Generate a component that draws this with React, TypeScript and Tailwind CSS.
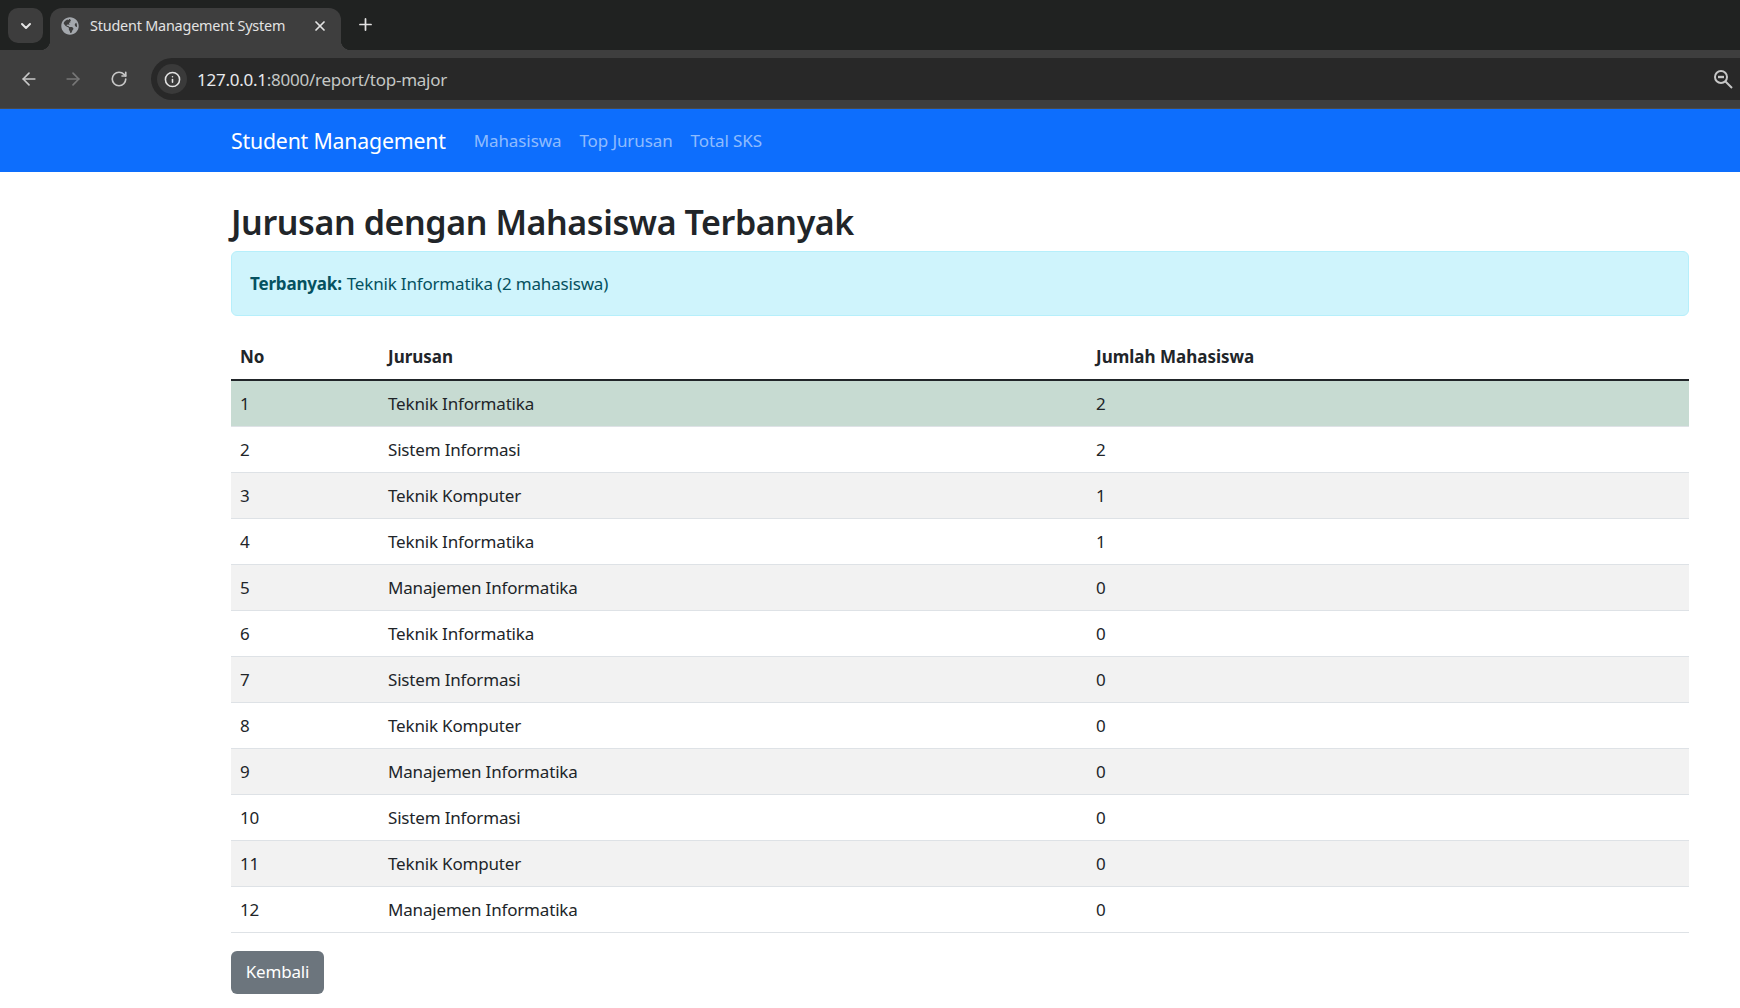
import { ArrowLeft, ArrowRight, ChevronDown, Info, Plus, RotateCw, X } from "lucide-react";
import { FaGlobeAmericas } from "react-icons/fa";

const rows: [number, string, number][] = [
  [1, "Teknik Informatika", 2],
  [2, "Sistem Informasi", 2],
  [3, "Teknik Komputer", 1],
  [4, "Teknik Informatika", 1],
  [5, "Manajemen Informatika", 0],
  [6, "Teknik Informatika", 0],
  [7, "Sistem Informasi", 0],
  [8, "Teknik Komputer", 0],
  [9, "Manajemen Informatika", 0],
  [10, "Sistem Informasi", 0],
  [11, "Teknik Komputer", 0],
  [12, "Manajemen Informatika", 0],
];

function ZoomOutIcon() {
  return (
    <svg width="20" height="20" viewBox="0 0 20 20" fill="none" stroke="currentColor" strokeWidth="2">
      <circle cx="8" cy="8" r="6" />
      <path d="M12.5 12.5 19 19" />
      <path d="M5 8h6" strokeWidth="2.4" />
    </svg>
  );
}

function BrowserChrome() {
  return (
    <div className="font-['Noto_Sans',sans-serif]">
      <div className="flex h-[50px] items-end bg-[#202221] pl-[8px]">
        <div className="mb-[7px] flex h-[35px] w-[35px] items-center justify-center rounded-[10px] bg-[#3d3d3d] text-[#e6e6e6]">
          <ChevronDown size={16} strokeWidth={3} />
        </div>
        <div className="relative ml-[7px] flex h-[42px] w-[291px] items-center rounded-t-[12px] bg-[#3e3e3e] pb-[7px] pl-[11px] pr-[13px] text-[#e3e3e3]">
          <span className="absolute bottom-0 left-[-10px] h-[10px] w-[10px] bg-[radial-gradient(circle_at_0_0,#202221_10px,#3e3e3e_10.5px)]" />
          <span className="absolute bottom-0 right-[-10px] h-[10px] w-[10px] bg-[radial-gradient(circle_at_100%_0,#202221_10px,#3e3e3e_10.5px)]" />
          <FaGlobeAmericas size={18} className="text-[#a4a8ad]" />
          <span className="ml-[11px] flex-1 whitespace-nowrap text-[14.4px] tracking-[-0.2px]">Student Management System</span>
          <X size={16} strokeWidth={2.6} />
        </div>
        <div className="mb-[16px] ml-[15px] text-[#e3e3e3]">
          <Plus size={19} strokeWidth={2.2} />
        </div>
      </div>
      <div className="flex h-[58px] items-center bg-[#3e3e3e] pl-[19px] text-[#c7c7c7]">
        <ArrowLeft size={20} strokeWidth={2} />
        <ArrowRight size={20} strokeWidth={2} className="ml-[24px] text-[#777777]" />
        <RotateCw size={18} strokeWidth={2.2} className="ml-[27px]" />
        <div className="ml-[23px] flex h-[42px] flex-1 items-center rounded-l-[21px] bg-[#282828] pl-[6px] pr-[7px]">
          <div className="flex h-[30px] w-[30px] items-center justify-center rounded-full bg-[#3a3a3a] text-[#e3e3e3]">
            <Info size={17} strokeWidth={2.2} />
          </div>
          <span className="ml-[10px] flex-1 pt-[1px] text-[17px] tracking-[-0.25px] text-[#c4c7c5]">
            <span className="text-[#e8eaed]">127.0.0.1</span>:8000/report/top-major
          </span>
          <ZoomOutIcon />
        </div>
      </div>
      <div className="h-px bg-[#4a4a4a]" />
    </div>
  );
}

export default function App() {
  return (
    <div className="min-h-[1008px] overflow-hidden bg-white font-['Noto_Sans',sans-serif] text-[17px] tracking-[-0.18px] text-[#212529]">
      <BrowserChrome />

      <nav className="flex h-[63px] items-center bg-[#0d6efd] pl-[231px]">
        <span className="text-[21.3px] tracking-[-0.2px] text-white">Student Management</span>
        <div className="ml-[28px] flex gap-[18px] tracking-[-0.1px] text-[rgba(255,255,255,0.55)]">
          <span>Mahasiswa</span>
          <span>Top Jurusan</span>
          <span>Total SKS</span>
        </div>
      </nav>

      <main className="ml-[231px] w-[1458px]">
        <h1 className="mt-[28px] text-[34px] font-semibold leading-[44px] tracking-[-0.4px]">Jurusan dengan Mahasiswa Terbanyak</h1>
        <div className="mt-[7px] flex h-[65px] items-center rounded-[6px] border border-[#b6effb] bg-[#cff4fc] px-[18px] text-[#055160]">
          <strong className="font-bold">Terbanyak:</strong>
          <span className="ml-[5px]">Teknik Informatika (2 mahasiswa)</span>
        </div>

        <table className="mt-[18px] w-full border-collapse">
          <thead>
            <tr className="h-[46px] border-b-2 border-[#212529] text-left font-bold tracking-normal">
              <th className="w-[148px] pl-[9px]">No</th>
              <th className="w-[708px] pl-[9px]">Jurusan</th>
              <th className="pl-[9px]">Jumlah Mahasiswa</th>
            </tr>
          </thead>
          <tbody>
            {rows.map(([no, major, total], i) => {
              const bg = i === 0 ? "bg-[#c7dbd2]" : i % 2 === 0 ? "bg-[#f2f2f2]" : "bg-white";
              return (
                <tr key={no} className={`h-[46px] border-b border-[#dee2e6] ${bg}`}>
                  <td className="pl-[9px] pt-[1px]">{no}</td>
                  <td className="pl-[9px] pt-[1px]">{major}</td>
                  <td className="pl-[9px] pt-[1px]">{total}</td>
                </tr>
              );
            })}
          </tbody>
        </table>

        <button className="mt-[18px] flex h-[43px] w-[93px] items-center justify-center rounded-[6px] bg-[#6c757d] text-white">
          Kembali
        </button>
      </main>
    </div>
  );
}
